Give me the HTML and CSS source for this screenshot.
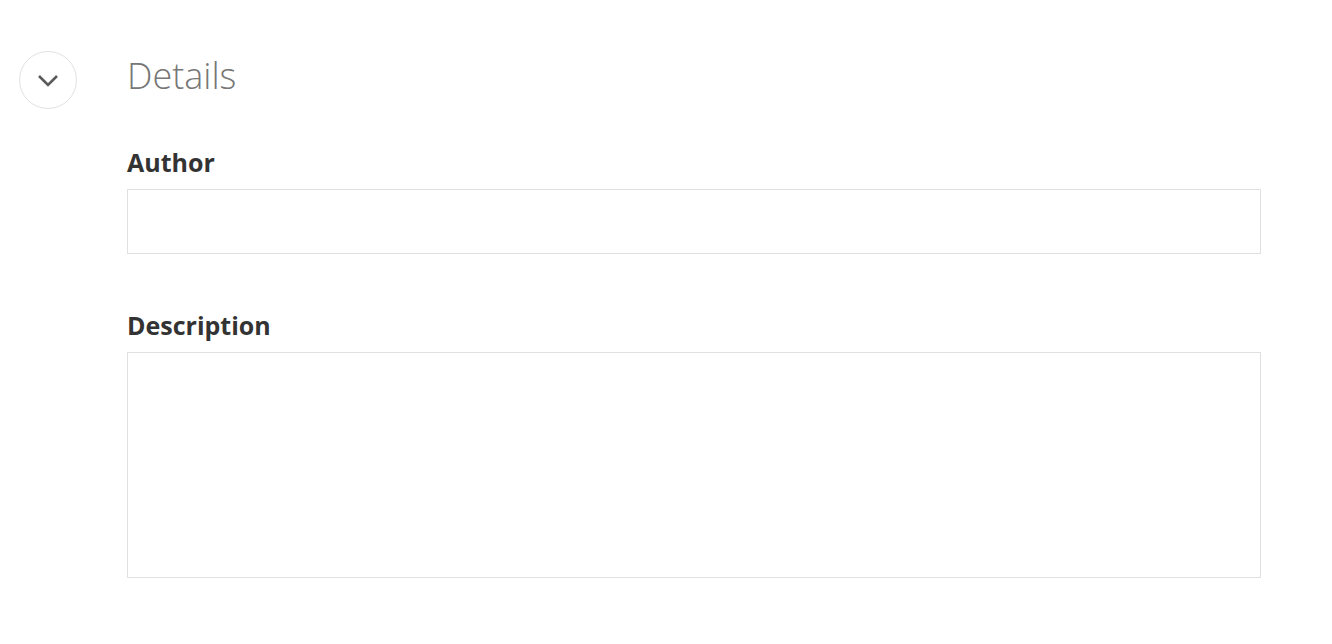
FILE: index.html
```html
<!DOCTYPE html>
<html>
<head>
<meta charset="utf-8">
<link rel="stylesheet" href="styles.css">
</head>
<body>
<div class="section">
  <div class="toggle-col">
    <button class="toggle" aria-label="Collapse">
      <svg width="22" height="13" viewBox="0 0 22 13"><path d="M2 2 L11 11 L20 2" fill="none" stroke="#5a5a5a" stroke-width="2.6" stroke-linecap="butt" stroke-linejoin="miter"/></svg>
    </button>
  </div>
  <div class="content">
    <h2 class="title">Details</h2>
    <div class="field">
      <label class="label">Author</label>
      <input class="input" type="text">
    </div>
    <div class="field">
      <label class="label">Description</label>
      <textarea class="textarea"></textarea>
    </div>
  </div>
</div>
</body>
</html>
```

FILE: styles.css
```css
html, body {
  margin: 0;
  padding: 0;
  background: #fff;
  font-family: "Open Sans", "Liberation Sans", sans-serif;
}
.section {
  display: flex;
  padding-top: 51px;
}
.toggle-col {
  width: 127px;
  padding-left: 19px;
  box-sizing: border-box;
}
.toggle {
  width: 58px;
  height: 58px;
  border-radius: 50%;
  border: 1px solid #e2e2e2;
  background: #fff;
  display: flex;
  align-items: center;
  justify-content: center;
  padding: 0;
}
.content {
  width: 1134px;
}
.title {
  margin: 0;
  font-weight: 300;
  font-size: 36px;
  line-height: 50px;
  color: #777;
}
.field {
  display: flex;
  flex-direction: column;
}
.label {
  font-weight: 700;
  font-size: 25px;
  line-height: 32px;
  color: #333;
  margin-top: 45px;
  margin-bottom: 11px;
}
.field + .field .label { margin-top: 55px; }
.input, .textarea {
  display: block;
  width: 100%;
  box-sizing: border-box;
  border: 1px solid #e0e0e0;
  border-radius: 0;
  background: #fff;
  margin: 0;
  font: inherit;
}
.input { height: 65px; }
.textarea { height: 226px; resize: none; }
```
